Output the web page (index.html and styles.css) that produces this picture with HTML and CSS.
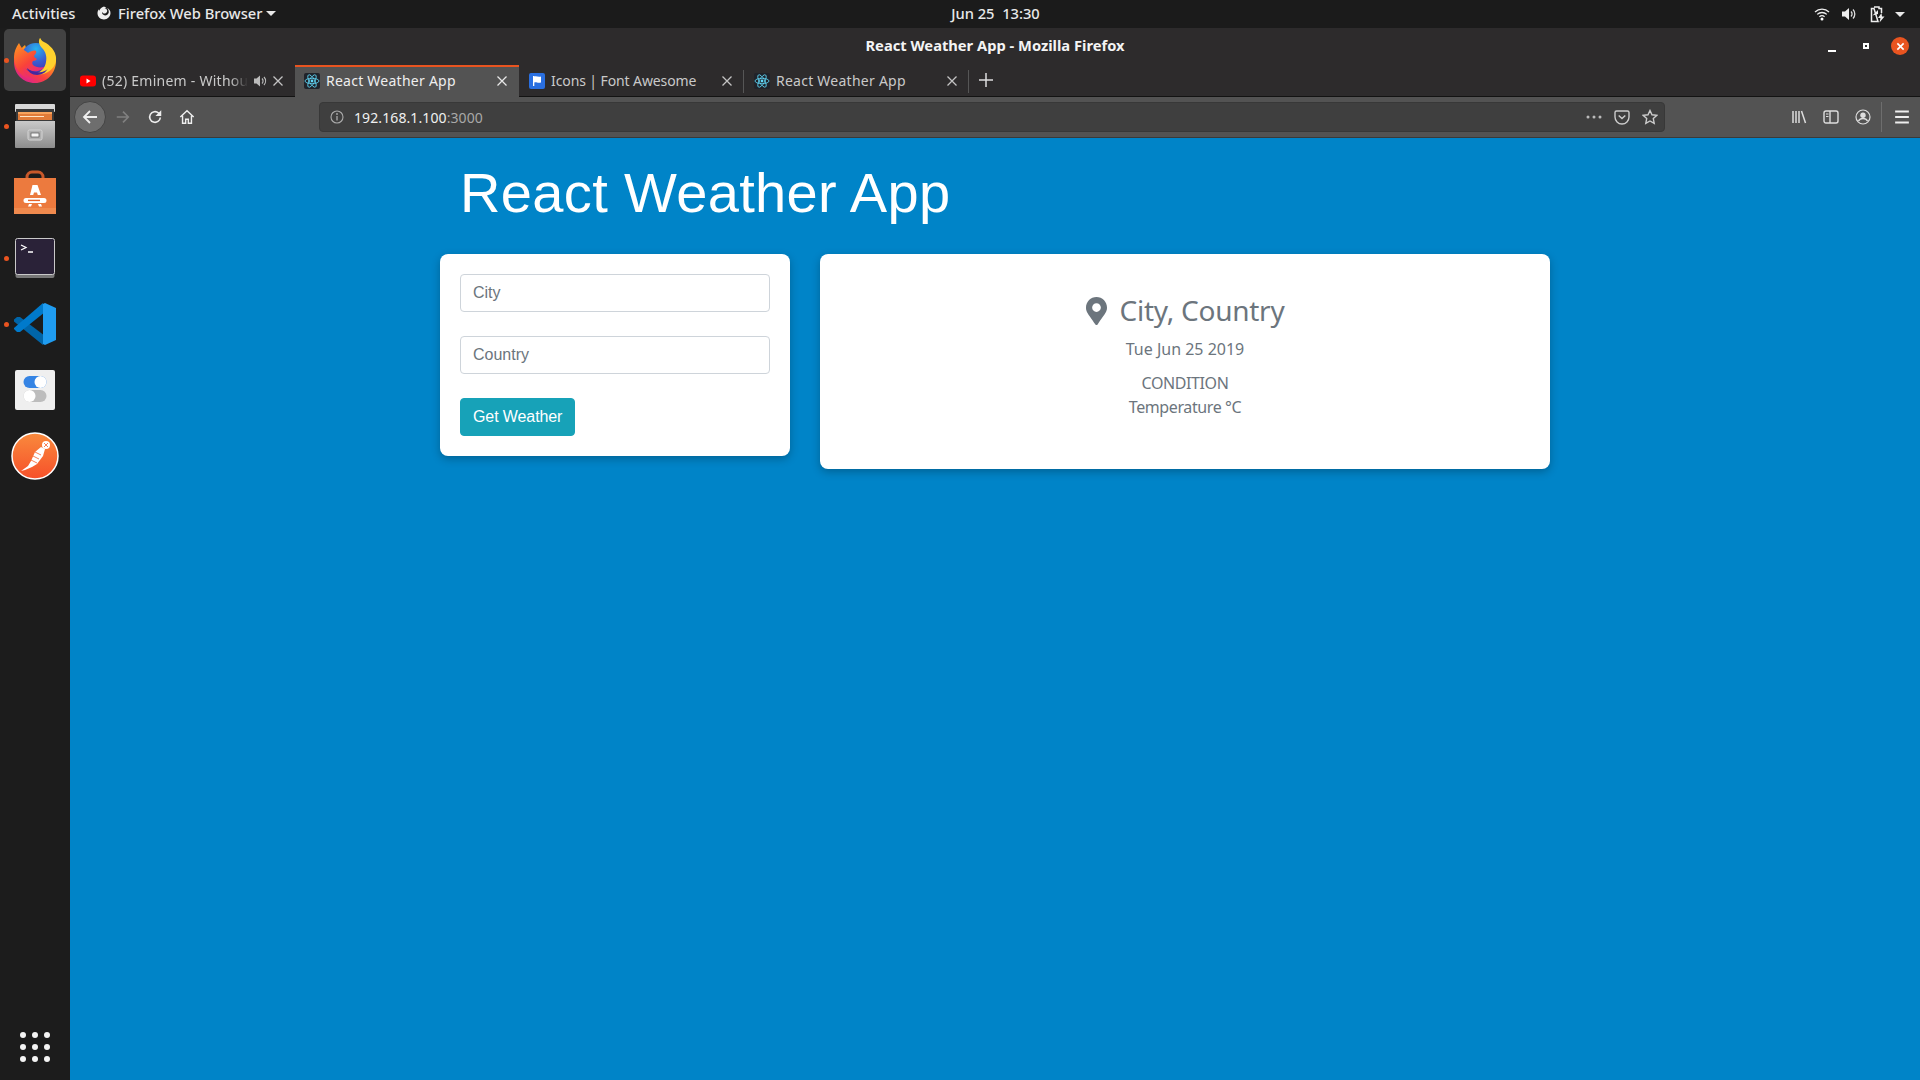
FILE: index.html
```html
<!DOCTYPE html>
<html lang="en">
<head>
<meta charset="UTF-8">
<meta name="viewport" content="width=device-width, initial-scale=1.0">
<title>React Weather App</title>
<link rel="stylesheet" href="styles.css">
</head>
<body>
<header class="topbar">
    <div class="topbar-left">
        <span class="activities">Activities</span>
        <svg class="panel-fox" viewBox="0 0 16 16"><path fill="#eee" d="M8 1.500c1 .4 2 1 2.600 1.800C9.800 3 9 3.100 8.500 3.600c1.300-.1 2.500.7 2.700 2 .2 1.500-1 2.900-2.600 2.900-1.300 0-2.100-.7-2.500-1.500-.2.800.2 2 1.300 2.800 1.800 1.300 4.600.3 5.300-2C13 6 12.400 4 11 3c2 .7 3.500 2.700 3.500 5 0 3.300-2.900 6.500-6.500 6.500S1.500 11.700 1.500 8.300c0-1.600.5-3 1.400-4.100 0 .6.100 1.100.4 1.500C3.700 4 5.500 2.300 8 1.500z"/></svg>
        <span class="app-menu">Firefox Web Browser</span>
        <i class="caret"></i>
    </div>
    <div class="clock">Jun 25&nbsp;&nbsp;13:30</div>
    <div class="topbar-right">
        <svg class="tray-wifi" viewBox="0 0 16 14"><path d="M1 5a10 10 0 0 1 14 0M3.200 7.400a7 7 0 0 1 9.600 0M5.400 9.700a4 4 0 0 1 5.200 0" fill="none" stroke="#eee" stroke-width="1.300"/><circle cx="8" cy="12" r="1.500" fill="#fff"/></svg>
        <svg class="tray-vol" viewBox="0 0 16 14"><path fill="#eee" d="M1 4.500h3L8 1v12L4 9.500H1z"/><path d="M10 4.500a3.500 3.500 0 0 1 0 5M12 2.500a6.500 6.500 0 0 1 0 9" fill="none" stroke="#ddd" stroke-width="1.300"/></svg>
        <svg class="tray-bat" viewBox="0 0 16 17"><path d="M5 1h5v1.500h2.500V7M9 15.500H2.500v-13H5z" fill="none" stroke="#eee" stroke-width="1.500"/><path d="M3.500 9.500L9 4v4z" fill="#eee"/><path fill="#eee" d="M12.500 7L9 12h2.500l-1 4.500 5-6h-2.500z"/></svg>
        <i class="caret"></i>
    </div>
</header>

<div class="desktop">
    <nav class="dock">
        <div class="dock-item active">
            <i class="run-dot"></i>
            <svg class="dock-fox" viewBox="0 0 44 45">
                <defs>
                    <linearGradient id="foxBody" x1="0.8" y1="0" x2="0.2" y2="1">
                        <stop offset="0" stop-color="#ffe83a"/><stop offset="0.35" stop-color="#ffa41c"/><stop offset="0.7" stop-color="#fb3f3e"/><stop offset="1" stop-color="#d6209b"/>
                    </linearGradient>
                    <linearGradient id="foxHead" x1="0" y1="0" x2="0.6" y2="1">
                        <stop offset="0" stop-color="#ff9a1f"/><stop offset="0.6" stop-color="#f9423a"/><stop offset="1" stop-color="#e5258a"/>
                    </linearGradient>
                    <radialGradient id="foxGlobe" cx="0.5" cy="0.2" r="0.9">
                        <stop offset="0" stop-color="#27b4ee"/><stop offset="0.5" stop-color="#3a5ad0"/><stop offset="1" stop-color="#4a2a9e"/>
                    </radialGradient>
                </defs>
                <path fill="url(#foxBody)" d="M27 0c1 3 2 5 6 7 6 4 10 9 10 16 0 12-9 22-21 22C10 45 1 36 1 24 1 20 2 16 3 12l3 3c1-3 3-6 6-8l8 20 10 3 6-14-6-7c-2-3-4-6-3-9z"/>
                <circle cx="23" cy="20" r="15" fill="url(#foxGlobe)"/>
                <path fill="#ffd22e" d="M27 0c-2 3-1 7 2 10 4 4 5 9 4 14-1 6-5 10-11 12 10 2 19-4 21-13 1-8-4-14-10-18-3-1-5-3-6-5z"/>
                <path fill="url(#foxHead)" d="M6 5c-3 4-5 9-5 14 0 12 9 23 21 23-7-2-12-7-12-13 3 3 10 5 15 4 4-1 6-3 6-4-4 1-9 0-11-2-1-1-1-3 0-4 2 0 3-1 4-2-2-1-3-2-3-3 1-2 3-3 2-5-2-1-5 0-8 2-2-2-6-3-9-10z"/>
                <path fill="#4428a0" d="M14 30c3 3 9 5 15 4 4-1 6-3 6-4-1 3-5 7-11 7-5 0-9-3-10-7z"/>
            </svg>
        </div>
        <div class="dock-item">
            <i class="run-dot"></i>
            <svg class="dock-files" viewBox="0 0 42 44">
                <defs>
                    <linearGradient id="cabinet" x1="0" y1="0" x2="0" y2="1"><stop offset="0" stop-color="#c9c9c9"/><stop offset="1" stop-color="#8d8d8d"/></linearGradient>
                </defs>
                <rect x="1" y="0" width="40" height="8" rx="1" fill="#d8d8d8"/>
                <rect x="2" y="5" width="38" height="12" fill="#3a3a3a"/>
                <rect x="4" y="8" width="34" height="3" fill="#f7a35c"/>
                <rect x="4" y="10" width="34" height="6" fill="#e07b39"/>
                <rect x="6" y="12" width="24" height="1" fill="#ffe4c4"/>
                <path fill="url(#cabinet)" d="M1 17h40v26a1 1 0 0 1-1 1H2a1 1 0 0 1-1-1z"/>
                <rect x="14" y="26" width="14" height="10" rx="1.500" fill="#b0b0b0" stroke="#d5d5d5"/>
                <rect x="17" y="29" width="8" height="4" fill="#f4f4f4" stroke="#555" stroke-width="0.700"/>
            </svg>
        </div>
        <div class="dock-item">
            <svg class="dock-store" viewBox="0 0 42 44">
                <path d="M13 13V7a5 5 0 0 1 5-5h6a5 5 0 0 1 5 5v6" fill="none" stroke="#c8582a" stroke-width="3"/>
                <path fill="#ec7a3e" d="M0 8h42v36H0z"/>
                <path fill="#f08a4e" d="M0 38h42v6H0z"/>
                <path fill="#fff" d="M18.500 15h5l3.500 10h-3.200l-.8-2.600h-3l-.8 2.600H16zM12 28h18a1.500 1.500 0 0 1 0 5H12a1.500 1.500 0 0 1 0-5z"/>
                <path fill="#e4632a" d="M14 29.700h12v1.400H14z"/>
                <path fill="#fff" d="M15 34h3l-1 2.500h-3zM24 34h3l1 2.500h-3z"/>
            </svg>
        </div>
        <div class="dock-item">
            <i class="run-dot"></i>
            <svg class="dock-term" viewBox="0 0 40 40">
                <rect x="0.500" y="3" width="39" height="37" rx="2" fill="#777"/>
                <rect x="0.500" y="0.500" width="39" height="36" rx="2" fill="#2a2238" stroke="#c9c9c9"/>
                <path d="M6 7l5 2.500L6 12M13 14h5" fill="none" stroke="#fff" stroke-width="1.300"/>
            </svg>
        </div>
        <div class="dock-item">
            <i class="run-dot"></i>
            <svg class="dock-code" viewBox="0 0 42 42">
                <path fill="#0065a9" d="M3 14l-3 2.500v2l29 23.500 2-9L6 14z"/>
                <path fill="#007acc" d="M0 26v-1L29 0l2 9L6 29h-3z"/>
                <path fill="#1f9cf0" d="M31 0l11 5v32l-11 5-2-1V1z"/>
                <path fill="#1a1a1a" opacity="0.250" d="M29 12v18l-11-9z"/>
            </svg>
        </div>
        <div class="dock-item">
            <svg class="dock-tweaks" viewBox="0 0 40 40">
                <rect width="40" height="40" rx="2" fill="#efefef"/>
                <rect x="8.500" y="6" width="23" height="12" rx="6" fill="#3584e4"/>
                <circle cx="25.500" cy="12" r="6" fill="#fff"/>
                <rect x="8.500" y="20" width="23" height="12" rx="6" fill="#bdbdbd"/>
                <circle cx="14.500" cy="26" r="6" fill="#fff"/>
            </svg>
        </div>
        <div class="dock-item">
            <svg class="dock-postman" viewBox="0 0 48 48">
                <defs>
                    <linearGradient id="pm" x1="0" y1="0" x2="0" y2="1"><stop offset="0" stop-color="#f98a3d"/><stop offset="1" stop-color="#f6502a"/></linearGradient>
                </defs>
                <circle cx="24" cy="24" r="23" fill="url(#pm)" stroke="#fff" stroke-width="1.500"/>
                <path d="M10 39l7-5 3-5 4-9 6-5 4 2-2 7-6 8-5 3-7 3z" fill="#fff"/>
                <circle cx="35" cy="13" r="4" fill="#fff"/>
                <path d="M22 24l6 3M20 28l6 3M24 20l6 3M33 11l4 4M37 11l-4 4" stroke="#f6602c" stroke-width="0.800"/>
            </svg>
        </div>
        <div class="app-grid">
            <i></i><i></i><i></i><i></i><i></i><i></i><i></i><i></i><i></i>
        </div>
    </nav>

    <div class="window">
        <div class="titlebar">
            <div class="title">React Weather App - Mozilla Firefox</div>
            <div class="win-controls">
                <i class="win-min"></i>
                <i class="win-max"></i>
                <span class="win-close">
                    <svg viewBox="0 0 10 10"><path d="M1.500 1.500l7 7M8.500 1.500l-7 7" stroke="#fff" stroke-width="1.800"/></svg>
                </span>
            </div>
        </div>

        <div class="tabbar">
            <div class="tab">
                <svg class="favicon" viewBox="0 0 16 16"><rect y="2.500" width="16" height="11" rx="3" fill="#f00"/><path d="M6.500 5.500l4 2.500-4 2.500z" fill="#fff"/></svg>
                <span class="tab-label faded">(52) Eminem - Without</span>
                <svg class="tab-sound" viewBox="0 0 14 14"><path fill="#bbb" d="M1 4.500h2.500L7 1.500v11l-3.500-3H1z"/><path d="M9 4.500a3.500 3.500 0 0 1 0 5M11 3a6 6 0 0 1 0 8" fill="none" stroke="#bbb" stroke-width="1.200"/></svg>
                <svg class="tab-close" viewBox="0 0 10 10"><path d="M0.500 0.500l9 9M9.500 0.500l-9 9" stroke="#c4c4c4" stroke-width="1.300"/></svg>
            </div>
            <div class="tab current">
                <svg class="favicon" viewBox="0 0 16 16"><use href="#reactLogo"/></svg>
                <span class="tab-label">React Weather App</span>
                <svg class="tab-close" viewBox="0 0 10 10"><path d="M0.500 0.500l9 9M9.500 0.500l-9 9" stroke="#e8e8e8" stroke-width="1.300"/></svg>
            </div>
            <div class="tab">
                <svg class="favicon" viewBox="0 0 16 16"><rect width="16" height="16" rx="2" fill="#2a6fe0"/><path d="M4 3v10h1.300V9.500c2-.8 3 .8 6.700 0v-6c-3 .8-4.500-.8-6.700 0V3z" fill="#fff"/></svg>
                <span class="tab-label narrow">Icons | Font Awesome</span>
                <svg class="tab-close" viewBox="0 0 10 10"><path d="M0.500 0.500l9 9M9.500 0.500l-9 9" stroke="#c4c4c4" stroke-width="1.300"/></svg>
            </div>
            <div class="tab last">
                <svg class="favicon" viewBox="0 0 16 16">
                    <g id="reactLogo">
                        <rect width="16" height="16" rx="2" fill="#20232a"/>
                        <g fill="none" stroke="#61dafb" stroke-width="0.800">
                            <ellipse cx="8" cy="8" rx="7" ry="2.700"/>
                            <ellipse cx="8" cy="8" rx="7" ry="2.700" transform="rotate(60 8 8)"/>
                            <ellipse cx="8" cy="8" rx="7" ry="2.700" transform="rotate(120 8 8)"/>
                        </g>
                        <circle cx="8" cy="8" r="1.400" fill="#61dafb"/>
                    </g>
                </svg>
                <span class="tab-label">React Weather App</span>
                <svg class="tab-close" viewBox="0 0 10 10"><path d="M0.500 0.500l9 9M9.500 0.500l-9 9" stroke="#c4c4c4" stroke-width="1.300"/></svg>
            </div>
            <svg class="tab-new" viewBox="0 0 14 14"><path d="M7 0v14M0 7h14" stroke="#ddd" stroke-width="1.500"/></svg>
        </div>

        <div class="toolbar">
            <span class="back-btn">
                <svg viewBox="0 0 18 18"><path d="M16 9H3M9 3L3 9l6 6" fill="none" stroke="#eee" stroke-width="1.800"/></svg>
            </span>
            <svg class="tool-icon forward" viewBox="0 0 18 18"><path d="M2 9h13M9 3l6 6-6 6" fill="none" stroke="#808080" stroke-width="1.800"/></svg>
            <svg class="tool-icon" viewBox="0 0 18 18"><path d="M15 9.500a6 6 0 1 1-2-5L15 6.500" fill="none" stroke="#eee" stroke-width="1.800"/><path d="M16 1.500V8H9.500z" fill="#eee"/></svg>
            <svg class="tool-icon" viewBox="0 0 18 18"><path d="M1.500 9L9 2l7.500 7M4 7.500V16h3.500v-4.500h3V16H14V7.500" fill="none" stroke="#eee" stroke-width="1.600"/></svg>

            <div class="urlbar">
                <svg class="url-info" viewBox="0 0 14 14"><circle cx="7" cy="7" r="6" fill="none" stroke="#aaa" stroke-width="1.100"/><path d="M7 6v4.500" stroke="#aaa" stroke-width="1.300"/><circle cx="7" cy="4" r="0.900" fill="#aaa"/></svg>
                <div class="url-text">192.168.1.100<span class="url-port">:3000</span></div>
                <svg class="url-dots" viewBox="0 0 16 4"><circle cx="2" cy="2" r="1.500" fill="#bbb"/><circle cx="8" cy="2" r="1.500" fill="#bbb"/><circle cx="14" cy="2" r="1.500" fill="#bbb"/></svg>
                <svg class="url-pocket" viewBox="0 0 16 16"><path d="M2.500 2h11A1.500 1.500 0 0 1 15 3.500V8a7 7 0 0 1-14 0V3.500A1.500 1.500 0 0 1 2.500 2z" fill="none" stroke="#ccc" stroke-width="1.400"/><path d="M4.700 6.500L8 9.500l3.300-3" fill="none" stroke="#ccc" stroke-width="1.500"/></svg>
                <svg class="url-star" viewBox="0 0 16 16"><path d="M8 1.500l2 4.300 4.700.6-3.400 3.200.9 4.700L8 12l-4.200 2.300.9-4.700L1.300 6.400 6 5.800z" fill="none" stroke="#ccc" stroke-width="1.400"/></svg>
            </div>

            <div class="tool-right">
                <svg class="tool-icon" viewBox="0 0 16 16"><path d="M2 2v12M5 2v12M8 2v12M10.500 2l4 12" fill="none" stroke="#ddd" stroke-width="1.500"/></svg>
                <svg class="tool-icon" viewBox="0 0 16 16"><rect x="1" y="2" width="14" height="12" rx="2" fill="none" stroke="#ddd" stroke-width="1.400"/><path d="M7 2v12" stroke="#ddd" stroke-width="1.400"/><path d="M3 5h2.500M3 7.500h2.500" stroke="#ddd"/></svg>
                <svg class="tool-icon" viewBox="0 0 16 16"><circle cx="8" cy="8" r="7" fill="none" stroke="#ddd" stroke-width="1.200"/><circle cx="8" cy="6.300" r="2.700" fill="#ddd"/><path d="M3.500 12c1-2 2.500-2.500 4.500-2.500s3.500.5 4.500 2.500" fill="none" stroke="#ddd" stroke-width="1.500"/></svg>
                <i class="tool-sep"></i>
                <svg class="tool-icon" viewBox="0 0 14 14"><path d="M1 2.200h12M1 7h12M1 11.800h12" stroke="#eee" stroke-width="1.600"/></svg>
            </div>
        </div>

        <main class="page">
            <div class="container">
                <h1 class="heading">React Weather App</h1>
                <div class="row">
                    <div class="col-form">
                        <form class="card">
                            <div class="form-group"><input class="form-control" type="text" placeholder="City"></div>
                            <div class="form-group"><input class="form-control" type="text" placeholder="Country"></div>
                            <button class="btn" type="button">Get Weather</button>
                        </form>
                    </div>
                    <div class="col-result">
                        <div class="card result">
                            <h3 class="location">
                                <svg class="pin" viewBox="0 0 384 512"><path fill="#6c757d" d="M172.268 501.670C26.970 291.031 0 269.413 0 192 0 85.961 85.961 0 192 0s192 85.961 192 192c0 77.413-26.970 99.031-172.268 309.670-9.535 13.774-29.930 13.773-39.464 0zM192 272c44.183 0 80-35.817 80-80s-35.817-80-80-80-80 35.817-80 80 35.817 80 80 80z"/></svg>
                                City, Country
                            </h3>
                            <p class="date">Tue Jun 25 2019</p>
                            <p class="cond">CONDITION</p>
                            <p class="cond">Temperature °C</p>
                        </div>
                    </div>
                </div>
            </div>
        </main>
    </div>
</div>
</body>
</html>
```

FILE: styles.css
```css
* { box-sizing: border-box; }
html, body { height: 100%; }
body {
    margin: 0;
    height: 1080px;
    overflow: hidden;
    display: flex;
    flex-direction: column;
    font-family: "Noto Sans", sans-serif;
    background: #0084c8;
}
i { display: block; }

/* gnome panel */
.topbar {
    height: 28px;
    flex: none;
    background: #1b1b1b;
    color: #e8e8e8;
    font-size: 14.7px;
    font-weight: 500;
    position: relative;
    display: flex;
    align-items: center;
    justify-content: space-between;
    padding: 0 15px 0 12px;
}
.topbar-left, .topbar-right { display: flex; align-items: center; }
.topbar-left { padding-bottom: 2px; }
.activities { width: 84px; }
.panel-fox { width: 16px; height: 16px; margin-right: 6px; }
.caret {
    width: 0;
    height: 0;
    margin-left: 7px;
    border-left: 5px solid transparent;
    border-right: 5px solid transparent;
    border-top: 5px solid #e8e8e8;
}
.topbar-left .caret { margin-left: 3px; }
.clock {
    position: absolute;
    left: 0;
    right: 0;
    top: 3px;
    padding-left: 71px;
    text-align: center;
}
.tray-wifi { width: 16px; height: 14px; margin-right: 11px; }
.tray-vol { width: 16px; height: 14px; margin-right: 12px; }
.tray-bat { width: 16px; height: 17px; margin-right: 3px; }

.desktop { flex: 1; display: flex; min-height: 0; }

/* launcher */
.dock {
    width: 70px;
    flex: none;
    background: #1c1c1c;
    display: flex;
    flex-direction: column;
    align-items: center;
    padding-top: 1px;
}
.dock-item {
    width: 62px;
    height: 66px;
    flex: none;
    position: relative;
    display: flex;
    align-items: center;
    justify-content: center;
}
.dock-item.active {
    height: 62px;
    margin-bottom: 2px;
    background: #424242;
    border-radius: 5px;
}
.run-dot {
    position: absolute;
    left: 0;
    top: calc(50% - 2.5px);
    width: 5px;
    height: 5px;
    border-radius: 50%;
    background: #e95420;
}
.dock-fox { width: 44px; height: 45px; }
.dock-files, .dock-store { width: 42px; height: 44px; }
.dock-term, .dock-tweaks { width: 40px; height: 40px; }
.dock-code { width: 42px; height: 42px; }
.dock-postman { width: 48px; height: 48px; }
.app-grid {
    margin-top: auto;
    margin-bottom: 18px;
    display: grid;
    grid-template-columns: repeat(3, 6px);
    gap: 6px;
}
.app-grid i { width: 6px; height: 6px; border-radius: 50%; background: #f4f4f4; }

/* firefox window */
.window { flex: 1; display: flex; flex-direction: column; min-width: 0; }
.titlebar {
    height: 37px;
    flex: none;
    background: #2d2b2c;
    position: relative;
}
.title {
    text-align: center;
    padding-top: 7px;
    color: #f4f4f4;
    font-size: 14.7px;
    font-weight: 700;
}
.win-controls {
    position: absolute;
    right: 11px;
    top: 9px;
    display: flex;
    align-items: center;
}
.win-min { width: 8px; height: 2px; background: #fff; margin: 9px 27px 0 0; }
.win-max { width: 6px; height: 6px; border: 2px solid #fff; margin-right: 22px; }
.win-close {
    width: 18px;
    height: 18px;
    border-radius: 50%;
    background: #e95420;
    display: flex;
    align-items: center;
    justify-content: center;
}
.win-close svg { width: 9px; height: 9px; }

.tabbar {
    height: 32px;
    flex: none;
    background: #2d2b2c;
    border-bottom: 1px solid #131313;
    display: flex;
    align-items: stretch;
    color: #c9c9c9;
    font-size: 14px;
}
.tab {
    width: 225px;
    flex: none;
    display: flex;
    align-items: center;
    padding: 0 10px;
    position: relative;
}
.tab::after {
    content: "";
    position: absolute;
    right: 0;
    top: 5px;
    bottom: 3px;
    width: 1px;
    background: #565656;
}
.tab:first-child::after, .tab.current::after { display: none; }
.tab.current {
    width: 224px;
    background: #535353;
    border-top: 2px solid #e95420;
    height: 32px;
    padding: 0 10px 3px 9px;
    color: #eee;
}
.favicon { width: 16px; height: 16px; flex: none; margin-right: 6px; }
.tab-label { flex: 1; min-width: 0; white-space: nowrap; letter-spacing: 0.25px; }
.tab-label.narrow { letter-spacing: -0.1px; }
.tab-label.faded {
    -webkit-mask-image: linear-gradient(to right, #000 88%, transparent);
    mask-image: linear-gradient(to right, #000 88%, transparent);
}
.tab-sound { width: 14px; height: 14px; flex: none; margin: 0 -3px 0 5px; }
.tab-close { width: 10px; height: 10px; flex: none; margin-left: 9px; margin-right: 2px; }
.tab-new { width: 14px; height: 14px; align-self: center; margin-left: 10px; margin-bottom: 1px; }

.toolbar {
    height: 41px;
    flex: none;
    background: #535353;
    border-bottom: 1px solid #3a3a3a;
    display: flex;
    align-items: center;
    padding-left: 4px;
}
.back-btn {
    width: 32px;
    height: 32px;
    flex: none;
    border-radius: 50%;
    background: #6e6e6e;
    border: 1px solid #444;
    display: flex;
    align-items: center;
    justify-content: center;
}
.back-btn svg { width: 18px; height: 18px; }
.tool-icon { width: 16px; height: 16px; flex: none; margin-left: 16px; }
.tool-icon.forward { margin-left: 9px; }
.urlbar {
    width: 1346px;
    height: 30px;
    flex: none;
    margin-left: 124px;
    background: #3f3f3f;
    border: 1px solid #383838;
    border-radius: 4px;
    display: flex;
    align-items: center;
    padding: 0 6px 0 10px;
}
.url-info { width: 14px; height: 14px; flex: none; }
.url-text {
    flex: 1;
    margin-left: 10px;
    color: #f0f0f0;
    font-size: 14px;
    letter-spacing: 0.1px;
}
.url-port { color: #a8a8a8; }
.url-dots { width: 16px; height: 4px; flex: none; }
.url-pocket { width: 16px; height: 16px; flex: none; margin-left: 12px; }
.url-star { width: 16px; height: 16px; flex: none; margin-left: 12px; }
.tool-right { display: flex; align-items: center; margin-left: 126px; }
.tool-right .tool-icon:first-child { margin-left: 0; }
.tool-sep { width: 1px; height: 30px; background: #6e6e6e; margin-left: 10px; }
.tool-right .tool-sep + .tool-icon { margin-left: 12px; }

/* the page itself */
.page { flex: 1; background: #0084c8; }
.container { width: 1140px; margin: 0 auto; padding: 21px 15px 0; }
.heading {
    margin: 0 0 28px 20px;
    color: #fff;
    font-family: "Liberation Sans", Arial, sans-serif;
    font-size: 56px;
    font-weight: 400;
    line-height: 1.2;
    letter-spacing: 0.35px;
}
.row { display: flex; gap: 30px; align-items: flex-start; }
.col-form { width: 350px; flex: none; }
.col-result { width: 730px; flex: none; }
.card {
    background: #fff;
    border-radius: 8px;
    padding: 20px;
    box-shadow: 0 3px 8px rgba(0,0,0,0.25);
}
.form-group { margin-bottom: 24px; }
.form-control {
    display: block;
    width: 100%;
    height: 38px;
    padding: 6px 12px;
    border: 1px solid #ced4da;
    border-radius: 4px;
    background: #fff;
    font-family: "Liberation Sans", Arial, sans-serif;
    font-size: 16px;
}
.form-control::placeholder { color: #6c757d; opacity: 1; }
.btn {
    display: block;
    height: 38px;
    padding: 6px 12px;
    border: 1px solid #17a2b8;
    border-radius: 4px;
    background: #17a2b8;
    color: #fff;
    font-family: "Liberation Sans", Arial, sans-serif;
    font-size: 16px;
    letter-spacing: -0.1px;
}
.result {
    padding: 40px 20px 50px;
    text-align: center;
    color: #6c757d;
    font-size: 16px;
    line-height: 24px;
}
.location {
    margin: 0 0 9px;
    font-size: 28px;
    font-weight: 400;
    line-height: 33.6px;
    letter-spacing: -0.25px;
    display: flex;
    justify-content: center;
    align-items: center;
}
.pin { width: 21px; height: 28px; margin-right: 13px; }
.result p { margin: 0; }
.result .date { margin-bottom: 10px; }
.result .cond { letter-spacing: -0.4px; }
```
